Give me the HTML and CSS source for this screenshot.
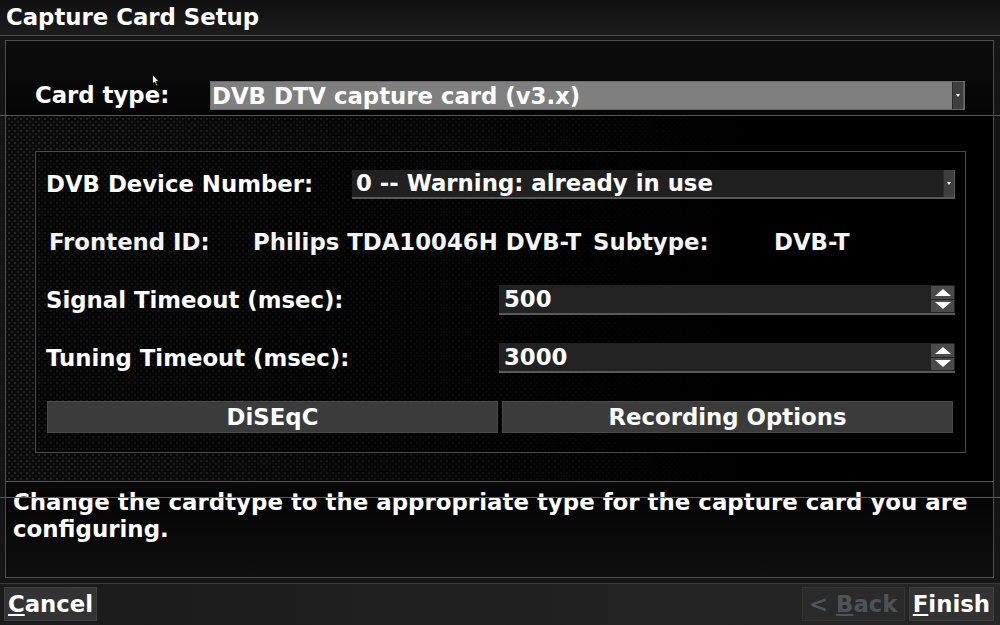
FILE: index.html
```html
<!DOCTYPE html>
<html lang="en">
<head>
  <meta charset="UTF-8" />
  <title>Capture Card Setup</title>
  <link rel="stylesheet" href="styles.css">
</head>
<body>
  <div class="title">Capture Card Setup</div>

  <div class="frame">
    <div class="top">
      <span class="top-label">Card type:</span>
      <div class="combo selected">
        <span>DVB DTV capture card (v3.x)</span>
        <span class="combo-arrow"><i></i></span>
      </div>
      <svg class="cursor" width="8" height="13" viewBox="0 0 8 13">
        <path d="M0.5 0.5 L0.5 10 L2.6 8 L4.3 12 L5.6 11.4 L4 7.6 L7 7.6 Z" fill="#fff" stroke="#000" stroke-width="0.8"/>
      </svg>
    </div>

    <div class="middle">
      <div class="group">
        <div class="row">
          <span class="label">DVB Device Number:</span>
          <div class="combo device">
            <span>0 -- Warning: already in use</span>
            <span class="combo-arrow"><i></i></span>
          </div>
        </div>

        <div class="row info">
          <span>Frontend ID:</span>
          <span>Philips TDA10046H DVB-T</span>
          <span>Subtype:</span>
          <span>DVB-T</span>
        </div>

        <div class="row">
          <span class="label">Signal Timeout (msec):</span>
          <div class="spin">
            <span>500</span>
            <span class="spin-btns"><b class="up"></b><b class="down"></b></span>
          </div>
        </div>

        <div class="row">
          <span class="label">Tuning Timeout (msec):</span>
          <div class="spin">
            <span>3000</span>
            <span class="spin-btns"><b class="up"></b><b class="down"></b></span>
          </div>
        </div>

        <div class="row buttons">
          <button class="btn">DiSEqC</button>
          <button class="btn">Recording Options</button>
        </div>
      </div>
    </div>

    <div class="help">
      Change the cardtype to the appropriate type for the capture card you are configuring.
    </div>
  </div>

  <div class="bottom">
    <button class="nav"><u>C</u>ancel</button>
    <div class="spacer"></div>
    <button class="nav disabled">&lt; <u>B</u>ack</button>
    <button class="nav"><u>F</u>inish</button>
  </div>
</body>
</html>
```

FILE: styles.css
```css
* {
  box-sizing: border-box;
}

body {
  margin: 0;
  width: 1000px;
  height: 625px;
  overflow: hidden;
  background: #151515;
  color: #fff;
  font-family: "DejaVu Sans", sans-serif;
  font-weight: bold;
  font-size: 22.8px;
}

.title {
  height: 36px;
  padding-left: 6px;
  line-height: 34px;
  background: linear-gradient(#101010, #1c1c1c);
  border-bottom: 1px solid #4a4a4a;
}

.frame {
  margin: 4px 6px 0 5px;
  border: 1px solid #4d4d4d;
  height: 538px;
  display: flex;
  flex-direction: column;
}

.top {
  height: 75px;
  flex: none;
  display: flex;
  align-items: flex-end;
  padding: 0 28px 5px 29px;
  background: linear-gradient(#0c0c0c, #050505);
  position: relative;
  border-bottom: 1px solid #555;
}

.top::after {
  content: "";
  position: absolute;
  left: -6px;
  right: -8px;
  bottom: -1px;
  height: 1px;
  background: #555;
}

.top-label {
  width: 175px;
  line-height: 29px;
}

.cursor {
  position: absolute;
  left: 146px;
  top: 33px;
}

.combo {
  flex: 1;
  height: 29px;
  display: flex;
  align-items: center;
  padding-left: 1px;
}

.combo span:first-child {
  flex: 1;
}

.combo.selected {
  background: #7f7f7f;
  border: 1px solid #6a6a6a;
}

.combo.device {
  background: #202020;
  border-bottom: 2px solid #5a5a5a;
  padding-left: 4px;
}

.combo-arrow {
  width: 12px;
  align-self: stretch;
  background: #3f3f3f;
  border-left: 1px solid #2a2a2a;
  border-right: 1px solid #5c5c5c;
  display: flex;
  align-items: center;
  justify-content: center;
}

.combo-arrow i {
  border-left: 2.5px solid transparent;
  border-right: 2.5px solid transparent;
  border-top: 3px solid #fff;
}

.middle {
  height: 366px;
  flex: none;
  border-bottom: 1px solid #555;
  padding: 35px 27px 0 29px;
  background-color: #0a0a0a;
  background-image:
    linear-gradient(to right, rgba(0,0,0,0) 0%, rgba(0,0,0,0.5) 45%, #000 75%),
    radial-gradient(circle, #262626 1px, transparent 1.6px),
    radial-gradient(circle, #1c1c1c 1px, transparent 1.6px);
  background-size: 100% 100%, 6px 6px, 6px 6px;
  background-position: 0 0, 0 0, 3px 3px;
}

.group {
  height: 302px;
  border: 1px solid #4a4a4a;
  padding: 17px 10px 0 10px;
  display: flex;
  flex-direction: column;
  gap: 28px;
  background: rgba(0,0,0,0.35);
}

.row {
  height: 30px;
  flex: none;
  display: flex;
  align-items: center;
}

.row .label {
  flex: none;
}

.row .combo.device {
  margin-left: auto;
  flex: none;
  width: 603px;
}

.info {
  display: grid;
  grid-template-columns: 204px 340px 181px 1fr;
  padding-left: 3px;
  color: #f4f4f4;
}

.spin {
  margin-left: auto;
  width: 456px;
  height: 30px;
  background: #222;
  border-bottom: 2px solid #5a5a5a;
  display: flex;
  align-items: center;
  padding-left: 5px;
}

.spin span:first-child {
  flex: 1;
}

.spin-btns {
  width: 23px;
  align-self: stretch;
  display: flex;
  flex-direction: column;
  gap: 1px;
  margin-right: 1px;
  padding: 1px 0;
}

.spin-btns b {
  flex: 1;
  background: #4a4a4a;
  display: flex;
  align-items: center;
  justify-content: center;
}

.spin-btns b::after {
  content: "";
  border-left: 8px solid transparent;
  border-right: 8px solid transparent;
}

.spin-btns .up::after {
  border-bottom: 7px solid #fff;
}

.spin-btns .down::after {
  border-top: 7px solid #fff;
}

.buttons {
  display: grid;
  grid-template-columns: 451px 451px;
  gap: 4px;
  height: 32px;
  padding-left: 1px;
}

.btn {
  height: 32px;
  background: #3b3b3b;
  border: 1px solid #4a4a4a;
  color: #fff;
  font-family: "DejaVu Sans", sans-serif;
  font-weight: bold;
  font-size: 22.8px;
  padding: 0;
}

.help {
  flex: 1;
  padding: 7px 6px 0 7px;
  font-size: 22.9px;
  line-height: 27px;
  background: linear-gradient(#0a0a0a 0, #050505 14px, #0e0e0e 100%);
  position: relative;
}

.help::before {
  content: "";
  position: absolute;
  left: -6px;
  right: -8px;
  top: 15px;
  height: 1px;
  background: #5a5a5a;
}

.bottom {
  margin-top: 5px;
  border-top: 1px solid #3a3a3a;
  height: 42px;
  display: flex;
  align-items: flex-start;
  gap: 4px;
  padding: 3px 6px 0 4px;
  background: linear-gradient(to right, #1a1a1a, #262626);
}

.spacer {
  flex: 1;
}

.nav {
  height: 34px;
  padding: 0 3px;
  background: #333;
  border: 1px solid #3e3e3e;
  color: #fff;
  font-family: "DejaVu Sans", sans-serif;
  font-weight: bold;
  font-size: 22.8px;
}

.nav.disabled {
  color: #4e5358;
  background: #2a2a2a;
  border-color: #333;
  width: 103px;
}
```
